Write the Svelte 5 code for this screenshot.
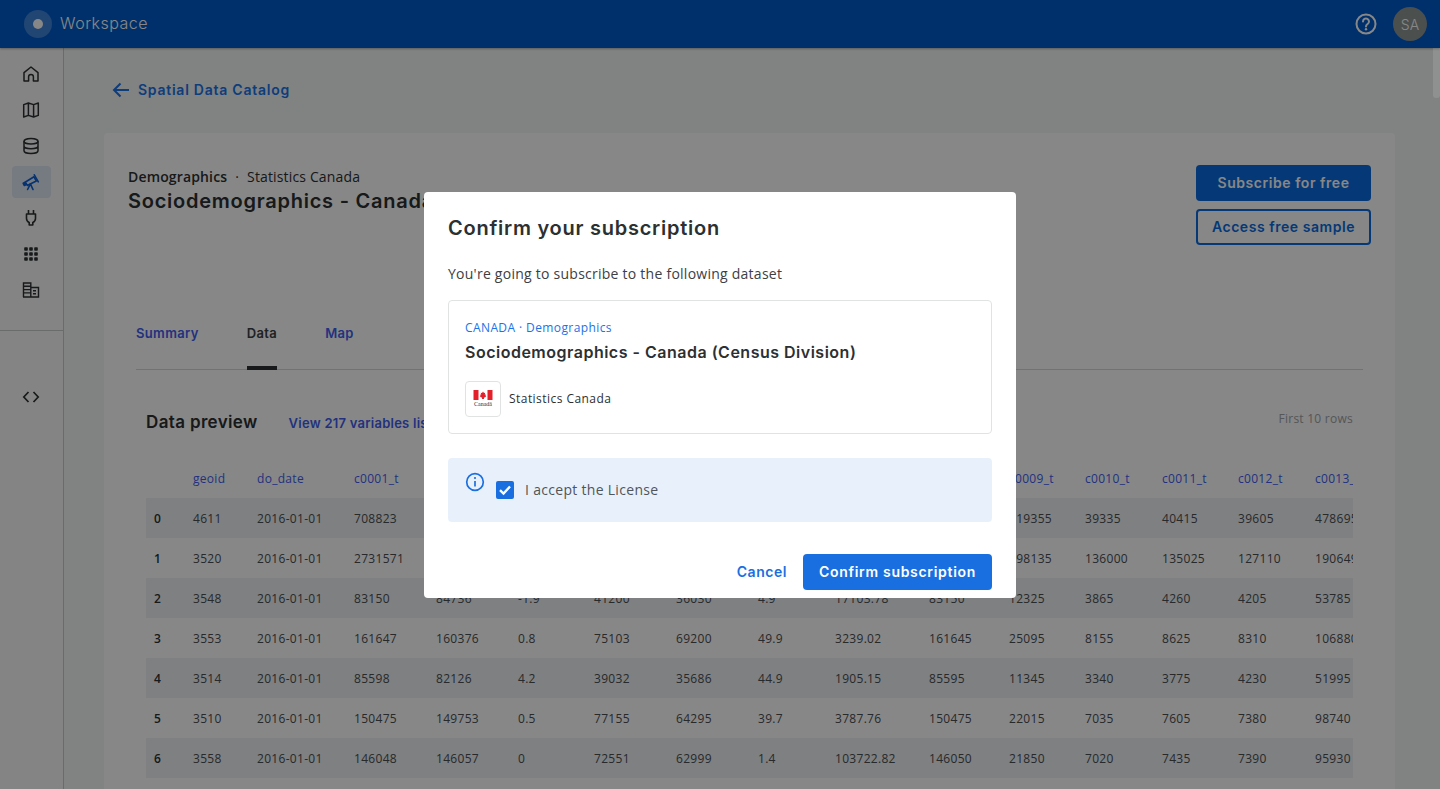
<script>
	let accepted = $state(true);

	const columns = ['geoid', 'do_date', 'c0001_t', 'c0002_t', 'c0003_t', 'c0004_t', 'c0005_t', 'c0006_t', 'c0007_t', 'c0008_t', 'c0009_t', 'c0010_t', 'c0011_t', 'c0012_t', 'c0013_t'];
	const widths = [47, 64, 97, 82, 82, 76, 82, 82, 77, 94, 80, 76, 77, 76, 77, 80];

	const rows = [
		['4611', '2016-01-01', '708823', '696992', '1.7', '345390', '363433', '40.2', '17.63', '708825', '119355', '39335', '40415', '39605', '478695'],
		['3520', '2016-01-01', '2731571', '2615060', '4.5', '1112930', '1179057', '41.5', '4334.4', '2731570', '398135', '136000', '135025', '127110', '1906490'],
		['3548', '2016-01-01', '83150', '84736', '-1.9', '41200', '36030', '4.9', '17103.78', '83150', '12325', '3865', '4260', '4205', '53785'],
		['3553', '2016-01-01', '161647', '160376', '0.8', '75103', '69200', '49.9', '3239.02', '161645', '25095', '8155', '8625', '8310', '106880'],
		['3514', '2016-01-01', '85598', '82126', '4.2', '39032', '35686', '44.9', '1905.15', '85595', '11345', '3340', '3775', '4230', '51995'],
		['3510', '2016-01-01', '150475', '149753', '0.5', '77155', '64295', '39.7', '3787.76', '150475', '22015', '7035', '7605', '7380', '98740'],
		['3558', '2016-01-01', '146048', '146057', '0', '72551', '62999', '1.4', '103722.82', '146050', '21850', '7020', '7435', '7390', '95930']
	];
</script>

<div class="page">
	<header class="topbar">
		<div class="brand">
			<span class="logo"><span class="logo-dot"></span></span>
			<span class="brand-name">Workspace</span>
		</div>
		<div class="top-actions">
			<svg width="24" height="24" viewBox="0 0 24 24" fill="none" stroke="#fff" stroke-width="2">
				<circle cx="12" cy="12" r="9.5" />
				<path d="M9 9.5a3 3 0 1 1 4.6 2.5c-1 .7-1.6 1.2-1.6 2.5" stroke-linecap="round" />
				<circle cx="12" cy="17.3" r="1.2" fill="#fff" stroke="none" />
			</svg>
			<span class="avatar">SA</span>
		</div>
	</header>

	<div class="body">
		<nav class="sidebar">
			<div class="nav-group">
				<span class="nav-item">
					<svg width="18" height="18" viewBox="0 0 18 18" fill="none" stroke="#2c3032" stroke-width="1.5" stroke-linejoin="round">
						<path d="M2 7.6 9 2l7 5.6V16h-4.6v-4.2a2.4 2.4 0 0 0-4.8 0V16H2z" />
					</svg>
				</span>
				<span class="nav-item">
					<svg width="18" height="18" viewBox="0 0 18 18" fill="none" stroke="#2c3032" stroke-width="1.5" stroke-linejoin="round">
						<path d="M1.7 3.6 6.4 2l5.2 1.6L16.3 2v12.4L11.6 16l-5.2-1.6-4.7 1.6zM6.4 2v12.4M11.6 3.6V16" />
					</svg>
				</span>
				<span class="nav-item">
					<svg width="18" height="18" viewBox="0 0 18 18" fill="none" stroke="#2c3032" stroke-width="1.5">
						<ellipse cx="9" cy="4.2" rx="7" ry="2.8" />
						<path d="M2 4.2v9.6C2 15.3 5.1 16.6 9 16.6s7-1.3 7-2.8V4.2M2 9c0 1.5 3.1 2.8 7 2.8s7-1.3 7-2.8" />
					</svg>
				</span>
				<span class="nav-item active">
					<svg width="18" height="18" viewBox="0 0 18 18" fill="none" stroke="#0a5fd8" stroke-width="1.6" stroke-linejoin="round" stroke-linecap="round">
						<path d="M1.2 10.300 3 9.300l1.200 2.200-1.800 1z" fill="#0a5fd8" />
						<path d="M3.500 9 12 3.800l2.300 4.200-9 4.500z" />
						<path d="M12.300 1.800l4 7" />
						<path d="M8.400 10.800 5.600 16.500M8.400 10.800l2.600 5.700" />
					</svg>
				</span>
				<span class="nav-item">
					<svg width="18" height="18" viewBox="0 0 18 18" fill="none" stroke="#2c3032" stroke-width="1.6" stroke-linejoin="round">
						<path d="M6.500 1v4M11.500 1v4M4.500 5h9v4.500a4.500 4.500 0 0 1-2.700 4V16H7.200v-2.500a4.500 4.500 0 0 1-2.700-4z" />
					</svg>
				</span>
				<span class="nav-item">
					<svg width="18" height="18" viewBox="0 0 18 18" fill="#2c3032">
						{#each [2.2, 7.2, 12.2] as y}
							{#each [2.2, 7.2, 12.2] as x}
								<rect {x} {y} width="3.600" height="3.600" rx="0.8" />
							{/each}
						{/each}
					</svg>
				</span>
				<span class="nav-item">
					<svg width="18" height="18" viewBox="0 0 18 18" fill="none" stroke="#2c3032" stroke-width="1.4">
						<path d="M1.500 16V2H8.800V16M8.800 6.500H16.500V16H1M1.500 5.300H8.800M1.500 8.600H8.800M1.500 11.900H8.800M11 9.700h3M11 12.700h3" />
					</svg>
				</span>
			</div>
			<div class="nav-bottom">
				<svg width="18" height="14" viewBox="0 0 18 14" fill="none" stroke="#2c3032" stroke-width="1.7">
					<path d="M6.500 2 1.800 7l4.700 5M11.500 2l4.700 5-4.700 5" />
				</svg>
			</div>
		</nav>

		<main class="content">
			<a class="back" href="#catalog">
				<svg width="18" height="16" viewBox="0 0 18 16" fill="none" stroke="#1a73e8" stroke-width="2">
					<path d="M17 8H2M8.500 1.500 2 8l6.500 6.500" />
				</svg>
				Spatial Data Catalog
			</a>

			<section class="card">
				<div class="card-head">
					<div>
						<div class="crumbs"><b>Demographics</b><span class="sep">·</span>Statistics Canada</div>
						<h1>Sociodemographics - Canada (Census Division)</h1>
					</div>
					<div class="head-buttons">
						<button class="btn solid">Subscribe for free</button>
						<button class="btn outline">Access free sample</button>
					</div>
				</div>

				<div class="tabs">
					<span class="tab">Summary</span>
					<span class="tab selected">Data</span>
					<span class="tab">Map</span>
				</div>

				<div class="preview">
					<div class="preview-head">
						<h2>Data preview</h2>
						<a class="vars" href="#vars">View 217 variables list</a>
						<span class="count">First 10 rows</span>
					</div>
					<div class="table-wrap">
						<table>
							<colgroup>
								{#each widths as w}
									<col style="width: {w}px" />
								{/each}
							</colgroup>
							<thead>
								<tr>
									<th></th>
									{#each columns as c}
										<th>{c}</th>
									{/each}
								</tr>
							</thead>
							<tbody>
								{#each rows as row, i}
									<tr>
										<td class="index">{i}</td>
										{#each row as cell}
											<td>{cell}</td>
										{/each}
										<td></td>
									</tr>
								{/each}
							</tbody>
						</table>
					</div>
				</div>
			</section>
		</main>
	</div>

	<div class="overlay">
		<div class="scrollbar"></div>
		<div class="modal" role="dialog" aria-modal="true">
			<h3>Confirm your subscription</h3>
			<p>You're going to subscribe to the following dataset</p>

			<div class="dataset">
				<div class="dataset-tag">CANADA · Demographics</div>
				<div class="dataset-name">Sociodemographics - Canada (Census Division)</div>
				<div class="provider">
					<span class="provider-logo">
						<svg width="20" height="11" viewBox="0 0 20 11">
							<rect x="0.500" width="5" height="10" fill="#e3202a" />
							<rect x="14.500" width="5" height="10" fill="#e3202a" />
							<path d="M10 1.500l1 1.600 1.200-.4-.4 2 1.300-.2-.6 1.400.8.500-2.400 1.400.2 1.100H9l.1-1.100-2.300-1.400.7-.5-.6-1.400 1.300.2-.4-2 1.200.4z" fill="#e3202a" />
						</svg>
						<span class="wordmark">Canadä</span>
					</span>
					<span class="provider-name">Statistics Canada</span>
				</div>
			</div>

			<div class="license">
				<svg class="info" width="20" height="20" viewBox="0 0 20 20" fill="none" stroke="#1a6fe0" stroke-width="1.700">
					<circle cx="10" cy="10" r="8.300" />
					<path d="M10 9v5.500" />
					<circle cx="10" cy="6" r="1.100" fill="#1a6fe0" stroke="none" />
				</svg>
				<label class="accept">
					<input type="checkbox" bind:checked={accepted} />
					<span class="box">
						{#if accepted}
							<svg width="14" height="14" viewBox="0 0 14 14" fill="none" stroke="#fff" stroke-width="2.400">
								<path d="M2 7.200 5.500 10.500 12 3.500" />
							</svg>
						{/if}
					</span>
					I accept the License
				</label>
			</div>

			<div class="actions">
				<button class="cancel">Cancel</button>
				<button class="confirm">Confirm subscription</button>
			</div>
		</div>
	</div>
</div>

<style>
	:global(body) {
		font-family: 'Open Sans', sans-serif;
		color: #2c3032;
		overflow: hidden;
	}

	.page {
		height: 789px;
		overflow: hidden;
		display: flex;
		flex-direction: column;
		background: #f4f6f6;
	}

	.topbar {
		flex: none;
		height: 48px;
		background: #005bcc;
		display: flex;
		align-items: center;
		justify-content: space-between;
		padding: 0 13px 0 24px;
		box-sizing: border-box;
		box-shadow: 0 1px 2px rgba(0, 0, 0, 0.3);
		position: relative;
	}

	.brand {
		display: flex;
		align-items: center;
		gap: 8px;
	}

	.logo {
		width: 28px;
		height: 28px;
		border-radius: 50%;
		background: rgba(255, 255, 255, 0.25);
		display: flex;
		align-items: center;
		justify-content: center;
	}

	.logo-dot {
		width: 10px;
		height: 10px;
		border-radius: 50%;
		background: #fff;
	}

	.brand-name {
		font-family: Inter, sans-serif;
		font-size: 16px;
		font-weight: 300;
		color: #fff;
		letter-spacing: 0.5px;
		position: relative;
		bottom: 1px;
	}

	.top-actions {
		display: flex;
		align-items: center;
		gap: 15px;
	}

	.avatar {
		width: 34px;
		height: 34px;
		border-radius: 50%;
		background: #8f9593;
		color: #fff;
		font-family: Inter, sans-serif;
		font-size: 14px;
		font-weight: 300;
		display: flex;
		align-items: center;
		justify-content: center;
	}

	.body {
		flex: 1;
		display: flex;
		min-height: 0;
	}

	.sidebar {
		flex: none;
		width: 64px;
		box-sizing: border-box;
		border-right: 1px solid #c8cccc;
		background: #f9f9f9;
	}

	.nav-group {
		display: flex;
		flex-direction: column;
		align-items: center;
		padding: 10px 0 24px;
		border-bottom: 1px solid #c8cccc;
		gap: 4px;
	}

	.nav-item {
		width: 39px;
		height: 32px;
		border-radius: 4px;
		display: flex;
		align-items: center;
		justify-content: center;
	}

	.nav-item svg {
		margin-right: 1px;
	}

	.nav-item.active {
		background: #dfe7f3;
	}

	.nav-bottom {
		display: flex;
		justify-content: center;
		padding: 59px 1px 0 0;
	}

	.content {
		flex: 1;
		min-width: 0;
		padding: 0 45px 0 40px;
	}

	.back {
		display: flex;
		align-items: center;
		gap: 8px;
		margin: 32px 0 0 8px;
		height: 18px;
		font-family: Inter, sans-serif;
		font-weight: 600;
		font-size: 14px;
		letter-spacing: 0.75px;
		color: #1a73e8;
		text-decoration: none;
	}

	.back svg {
		margin-top: 2px;
	}

	.card {
		margin-top: 35px;
		background: #fff;
		border-radius: 4px;
		padding: 32px 24px 40px;
	}

	.card-head {
		display: flex;
		justify-content: space-between;
		height: 155px;
	}

	.crumbs {
		font-size: 14px;
		line-height: 24px;
		letter-spacing: 0.15px;
	}

	.crumbs b {
		font-weight: 600;
	}

	.sep {
		margin: 0 8px;
	}

	h1 {
		margin: 0;
		font-family: Inter, sans-serif;
		font-size: 20px;
		font-weight: 600;
		line-height: 24px;
		letter-spacing: 0.75px;
		white-space: nowrap;
	}

	.head-buttons {
		display: flex;
		flex-direction: column;
		gap: 8px;
	}

	.btn {
		width: 175px;
		height: 36px;
		border-radius: 4px;
		font-family: Inter, sans-serif;
		font-weight: 600;
		font-size: 14px;
		letter-spacing: 0.55px;
		box-sizing: border-box;
		padding: 0 0 2px;
	}

	.btn.solid {
		background: #0a6be0;
		border: none;
		color: #fff;
	}

	.btn.outline {
		background: #fff;
		border: 2px solid #0a6be0;
		color: #0a6be0;
	}

	.tabs {
		margin: 0 8px;
		display: flex;
		gap: 48px;
		border-bottom: 1px solid #d6d8d8;
		height: 49px;
	}

	.tab {
		font-family: Inter, sans-serif;
		font-weight: 600;
		font-size: 13px;
		letter-spacing: 0.35px;
		color: #3f5ef0;
		line-height: 20px;
		position: relative;
		padding-top: 3px;
	}

	.tab.selected {
		color: #3c4044;
	}

	.tab.selected::after {
		content: '';
		position: absolute;
		left: 0;
		right: 0;
		bottom: -1px;
		height: 4px;
		background: #2c3032;
	}

	.preview {
		margin: 0 18px;
	}

	.preview-head {
		display: flex;
		align-items: center;
		height: 40px;
		margin-top: 32px;
	}

	h2 {
		margin: 0 31px 0 0;
		font-family: Inter, sans-serif;
		font-size: 17px;
		font-weight: 600;
		letter-spacing: 0.35px;
	}

	.vars {
		font-family: Inter, sans-serif;
		font-weight: 600;
		font-size: 13px;
		letter-spacing: 0.25px;
		color: #3f5ef0;
		text-decoration: none;
		position: relative;
		top: 1px;
	}

	.count {
		margin-left: auto;
		font-size: 12px;
		letter-spacing: 0.25px;
		color: #a0a4a6;
		position: relative;
		bottom: 4px;
	}

	.table-wrap {
		overflow: hidden;
		margin-top: 16px;
	}

	table {
		table-layout: fixed;
		width: 1283px;
		border-collapse: collapse;
		font-size: 12px;
		letter-spacing: 0.3px;
	}

	th {
		height: 40px;
		padding: 0;
		text-align: left;
		font-weight: 400;
		color: #3f5ef0;
	}

	td {
		height: 40px;
		padding: 0;
		white-space: nowrap;
		color: #4a4e52;
	}

	td.index {
		padding-left: 8px;
		font-weight: 600;
		color: #2c3032;
	}

	tbody tr:nth-child(odd) {
		background: #eff2f5;
	}

	.overlay {
		position: fixed;
		inset: 0;
		background: rgba(0, 0, 0, 0.47);
		display: grid;
		place-items: center;
	}

	.scrollbar {
		position: absolute;
		top: 48px;
		right: 0;
		width: 7px;
		height: 50px;
		background: rgba(255, 255, 255, 0.1);
		border-radius: 0 0 3px 3px;
	}

	.modal {
		width: 592px;
		height: 406px;
		box-sizing: border-box;
		background: #fff;
		border-radius: 4px;
		padding: 24px 24px 8px;
	}

	h3 {
		margin: 0;
		font-family: Inter, sans-serif;
		font-size: 20px;
		font-weight: 600;
		line-height: 24px;
		letter-spacing: 0.75px;
	}

	p {
		margin: 24px 0 0;
		font-size: 14px;
		line-height: 20px;
		letter-spacing: 0.25px;
		color: #3c4044;
	}

	.dataset {
		margin-top: 16px;
		height: 134px;
		box-sizing: border-box;
		border: 1px solid #e1e3e3;
		border-radius: 4px;
		padding: 19px 16px 0;
	}

	.dataset-tag {
		font-size: 12px;
		font-weight: 500;
		line-height: 16px;
		letter-spacing: 0.4px;
		color: #1a73e8;
	}

	.dataset-name {
		margin-top: 6px;
		font-family: Inter, sans-serif;
		font-size: 16px;
		font-weight: 600;
		line-height: 20px;
		letter-spacing: 0.5px;
	}

	.provider {
		display: flex;
		align-items: center;
		gap: 8px;
		margin-top: 19px;
	}

	.provider-logo {
		width: 36px;
		height: 36px;
		box-sizing: border-box;
		border: 1px solid #e1e3e3;
		border-radius: 4px;
		display: flex;
		flex-direction: column;
		align-items: center;
		justify-content: center;
	}

	.wordmark {
		font-family: 'Liberation Serif', serif;
		font-size: 6px;
		line-height: 6px;
	}

	.provider-name {
		font-size: 12px;
		font-weight: 500;
		letter-spacing: 0.45px;
	}

	.license {
		margin-top: 24px;
		height: 64px;
		box-sizing: border-box;
		background: #e8f1fb;
		border-radius: 4px;
		display: flex;
		padding: 14px 0 0 17px;
		gap: 11px;
	}

	.accept {
		display: flex;
		align-items: center;
		gap: 11px;
		height: 18px;
		margin-top: 9px;
		font-size: 14px;
		letter-spacing: 0.3px;
		color: #50555a;
	}

	.accept input {
		display: none;
	}

	.box {
		width: 18px;
		height: 18px;
		border-radius: 2px;
		background: #1a6fe0;
		display: flex;
		align-items: center;
		justify-content: center;
	}

	.actions {
		margin-top: 32px;
		display: flex;
		justify-content: flex-end;
		align-items: center;
		gap: 16px;
	}

	.cancel,
	.confirm {
		font-family: Inter, sans-serif;
		font-weight: 600;
		font-size: 14px;
		letter-spacing: 0.7px;
		border: none;
		border-radius: 4px;
		padding: 0;
		height: 36px;
	}

	.cancel {
		background: none;
		color: #1a6fe0;
		letter-spacing: 0.55px;
	}

	.confirm {
		width: 189px;
		background: #1a6fe0;
		color: #fff;
	}
</style>
